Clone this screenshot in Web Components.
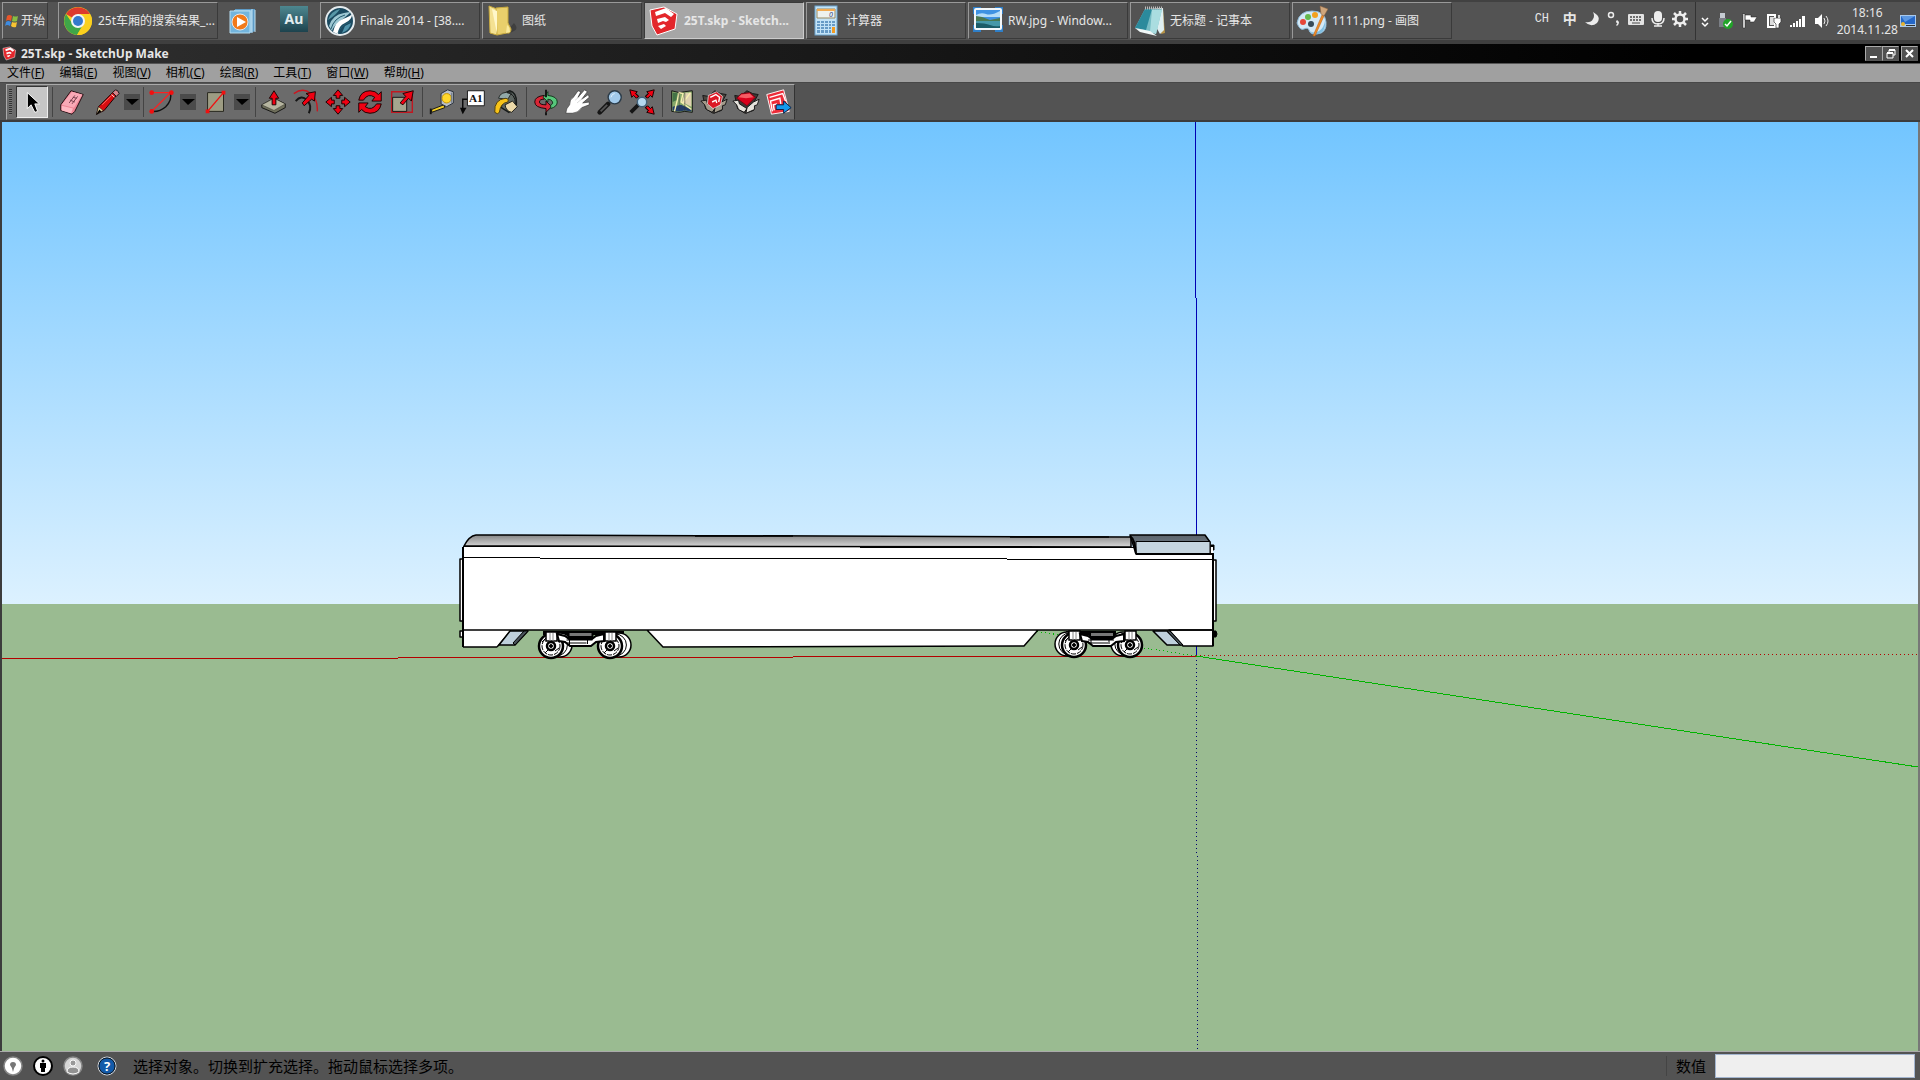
<!DOCTYPE html>
<html lang="zh-CN">
  <head>
    <meta charset="UTF-8" />
    <meta name="viewport" content="width=device-width, initial-scale=1.0" />
    <title>25T.skp - SketchUp Make</title>
    <style>
      html,
      body {
        height: 100%;
        margin: 0;
      }

      body {
        overflow: hidden;
        background: #535353;
        font: 12px/16px "Noto Sans", "Noto Sans CJK SC", sans-serif;
        color: #e6e6e6;
      }
    </style>
  </head>
  <body>
    <desk-top>
      <task-bar slot="taskbar">
        <start-button>开始</start-button>
        <task-button icon="chrome">25t车厢的搜索结果_...</task-button>
        <quick-button icon="player" label="Media Player"></quick-button>
        <quick-button icon="audition" label="Audition"></quick-button>
        <task-button icon="finale">Finale 2014 - [38....</task-button>
        <task-button icon="folder">图纸</task-button>
        <task-button icon="sketchup" active>25T.skp - Sketch...</task-button>
        <task-button icon="calc">计算器</task-button>
        <task-button icon="photo">RW.jpg - Window...</task-button>
        <task-button icon="notepad">无标题 - 记事本</task-button>
        <task-button icon="paint">1111.png - 画图</task-button>
        <system-tray slot="tray"></system-tray>
      </task-bar>
      <title-bar>25T.skp - SketchUp Make</title-bar>
      <menu-bar>
        <menu-entry key="F">文件</menu-entry>
        <menu-entry key="E">编辑</menu-entry>
        <menu-entry key="V">视图</menu-entry>
        <menu-entry key="C">相机</menu-entry>
        <menu-entry key="R">绘图</menu-entry>
        <menu-entry key="T">工具</menu-entry>
        <menu-entry key="W">窗口</menu-entry>
        <menu-entry key="H">帮助</menu-entry>
      </menu-bar>
      <tool-bar>
        <tool-button icon="select" label="选择" active></tool-button>
        <tool-sep></tool-sep>
        <tool-button icon="eraser" label="擦除"></tool-button>
        <tool-button icon="pencil" label="直线" split></tool-button>
        <tool-sep size="s"></tool-sep>
        <tool-button icon="arc" label="圆弧" split></tool-button>
        <tool-button icon="rect" label="矩形" split></tool-button>
        <tool-sep size="m"></tool-sep>
        <tool-button icon="push" label="推拉"></tool-button>
        <tool-button icon="offset" label="偏移"></tool-button>
        <tool-button icon="move" label="移动"></tool-button>
        <tool-button icon="rotate" label="旋转"></tool-button>
        <tool-button icon="scale" label="缩放"></tool-button>
        <tool-sep></tool-sep>
        <tool-button icon="tape" label="卷尺"></tool-button>
        <tool-button icon="text" label="文字"></tool-button>
        <tool-button icon="bucket" label="材质"></tool-button>
        <tool-sep></tool-sep>
        <tool-button icon="orbit" label="环绕观察"></tool-button>
        <tool-button icon="pan" label="平移"></tool-button>
        <tool-button icon="zoom" label="缩放"></tool-button>
        <tool-button icon="extents" label="充满视窗"></tool-button>
        <tool-sep></tool-sep>
        <tool-button icon="map" label="添加位置"></tool-button>
        <tool-button icon="warehouse" label="获取模型"></tool-button>
        <tool-button icon="extension" label="扩展程序库"></tool-button>
        <tool-button icon="layout" label="发送到 LayOut"></tool-button>
      </tool-bar>
      <model-view></model-view>
      <status-bar>选择对象。切换到扩充选择。拖动鼠标选择多项。</status-bar>
    </desk-top>

    <script>
      // icon markup: [viewBox, shapes]
      const logo = `<path d="M2 5L16 2 29 9 27 24 9 30 4 21z" fill="#e3262b" stroke="#fff" stroke-width="1"/>
        <path d="M7 7l11-4 8 6-3 3-6-4-9 3zM9 14l8-2 4 3-3 2-3-1-5 2zM10 21l6-2 2 2-5 3z" fill="#fff"/>`
      const head = 'fill="#f00012" stroke="#160000" stroke-width="1"'

      const icons = {
        flag: ["0 0 16 16", `<path d="M3 3q2-2 5 0L7 8Q4 6 2 8z" fill="#e8552a"/>
          <path d="M9 3q3 1 5 0l-1 5q-3 1-5 0z" fill="#87bd42"/>
          <path d="M2 9q2-2 5 0l-1 4q-3-2-5 0z" fill="#3d8be0"/>
          <path d="M8 9q3 1 5 0l-1 5q-3 1-5-1z" fill="#f7c332"/>`],
        chrome: ["0 0 32 32", `<circle cx="16" cy="16" r="14" fill="#fbd01e"/>
          <path d="M16 16L4 9A14 14 0 0 1 28 9H16z" fill="#dc3a2e"/>
          <path d="M4 9A14 14 0 0 0 15 30L21 20 16 16 10 18z" fill="#3fa648"/>
          <path d="M28 9H16v7l5 4-6 10A14 14 0 0 0 28 9z" fill="#fbd01e"/>
          <circle cx="16" cy="16" r="7" fill="#f2f4f6"/><circle cx="16" cy="16" r="5" fill="#3479cd"/>`],
        player: ["0 0 32 32", `<path d="M7 4h20v22l-4 2H7z" fill="#5d9bc6"/>
          <path d="M6 5h18v22H6z" fill="#8fc3e3"/><path d="M24 4v24M27 5v22" stroke="#c4e3f3"/>
          <path d="M2 6h20v22H2z" fill="#73b5dd" stroke="#b7ddf0"/>
          <circle cx="12" cy="17" r="8" fill="#f27a1a" stroke="#e8e8e8"/><path d="M9 12v10l9-5z" fill="#fff"/>`],
        audition: ["0 0 32 32", `<defs><linearGradient id="au" x2="0" y2="1"><stop stop-color="#4d8790"/><stop offset="1" stop-color="#1d434e"/></linearGradient></defs>
          <path d="M2 1h28v26H2z" fill="url(#au)"/>
          <text x="16" y="19" text-anchor="middle" font-family="Noto Sans" font-weight="700" font-size="14" fill="#e2edef">Au</text>`],
        finale: ["0 0 32 32", `<circle cx="16" cy="16" r="14" fill="#1b4a60" stroke="#e4ebee" stroke-width="2"/>
          <path d="M4 15Q7 6 16 4q-4 6-12 11z" fill="#5796a6"/>
          <path d="M5 21Q8 10 20 8q5-1 7-1Q19 14 14 18T8 26z" fill="#9dc7d2"/>
          <path d="M9 27Q11 17 19 14T28 9Q28 15 21 18T14 29z" fill="#fff"/>
          <path d="M7 24Q10 13 21 10M14 28Q17 20 26 17" stroke="#245c70" fill="none"/>
          <path d="M18 28q8-3 9-10l-6 3z" fill="#5194ab"/>`],
        folder: ["0 0 32 32", `<path d="M20 27l8-9q5 6 0 8l-6 3z" fill="#323232" opacity=".6"/>
          <path d="M3 1l8 3v26l-7-2z" fill="#f4e192" stroke="#c7a93e"/>
          <path d="M10 3l12-1v16l3 6q0 5-4 4l-10 2z" fill="#e9cf6b" stroke="#c7a93e"/>
          <path d="M6 4l5 2v23z" fill="#fff7c9"/><path d="M21 20q3 2 3 7l-4 1z" fill="#f9e99d"/>`],
        sketchup: ["0 0 32 32", logo],
        calc: ["0 0 32 32", `<rect x="5" y="1" width="22" height="29" fill="#c3e3f7" stroke="#6ea6cf"/>
          <path d="M7 4h18v9H7z" fill="#eef2ef" stroke="#9a8a60"/>
          <path d="M7 4h18v2H7z" fill="#f2ab52"/>
          <text x="21" y="12" text-anchor="middle" font-family="Noto Sans" font-style="italic" font-size="7" fill="#303c80">0</text>
          <g fill="#679bc6"><path d="M7 16h3v2H7zM11 16h3v2h-3zM15 16h3v2h-3zM19 16h2v2h-2zM22 16h3v2h-3zM7 19h3v2H7zM11 19h3v2h-3zM15 19h3v2h-3zM19 19h2v2h-2zM22 19h3v2h-3zM7 22h3v2H7zM11 22h3v2h-3zM15 22h3v2h-3zM19 22h2v2h-2zM7 25h3v3H7zM11 25h3v3h-3zM15 25h3v3h-3zM19 25h2v3h-2z"/></g>
          <path d="M22 22h3v6h-3z" fill="#f29b21"/>`],
        photo: ["0 0 32 32", `<path d="M1 2h30v25H1z" fill="#2f7fc8"/><path d="M9 1h14v27H9zM0 9h32v11H0z" fill="#535353"/>
          <rect x="3" y="4" width="26" height="20" rx="1" fill="#3f92e2" stroke="#f3f7fa" stroke-width="2"/>
          <path d="M4 10q5-3 10-1t14-3v6H4z" fill="#b4dcf7"/><path d="M4 11l6 1 8 3 10-2v4H4z" fill="#4b7850"/>
          <path d="M4 16h24v7H4z" fill="#4798a9"/><path d="M4 18q9 0 14 2t10 1v2H4z" fill="#1d5c68"/>`],
        notepad: ["0 0 32 32", `<path d="M29 4l2 24-4 1z" fill="#b79346"/><path d="M12 4l17-1 1 22-4 4z" fill="#dfeff1"/>
          <path d="M11 4h17l-6 25L1 23z" fill="#77bdc5"/><path d="M11 4h7l-6 21-11-2z" fill="#2b8a9c"/>
          <path d="M18 5h10l-6 24-6-2z" fill="#aadde0"/><path d="M1 23l15 3 7 5-17-4z" fill="#f1f8f8"/>
          <path d="M11 3h18" stroke="#bbb" stroke-width="3" stroke-dasharray="1 1"/>`],
        paint: ["0 0 32 32", `<path d="M1 18Q3 6 16 6t14 11-9 12q-7 1-8-4-1-3-5-1T1 18z" fill="#d4e9f6" stroke="#8cb8d6"/>
          <path d="M14 26q4 3 9 0t6-10q1 12-8 13-6 0-7-3z" fill="#7fbfe3"/>
          <circle cx="7" cy="17" r="3" fill="#e64638"/><circle cx="12" cy="12" r="3" fill="#65b94e"/>
          <circle cx="19" cy="10" r="3" fill="#f3a11e"/><circle cx="15" cy="19" r="3" fill="#384b58"/>
          <path d="M26 10l2 1-9 20-2 0z" fill="#f08d28" stroke="#b75c10" stroke-width=".5"/>
          <path d="M24 1l8 3-4 7-3-2z" fill="#cfa67c" stroke="#8c633f" stroke-width=".5"/>`],

        select: ["0 0 32 32", `<path d="M11 6v17l4-4 4 8 3-1-3-8h5z" fill="#000" stroke="#fff" stroke-width="1"/>`],
        eraser: ["0 0 32 32", `<path d="M4 19L15 4l13 4-9 18-3 3-12-4z" fill="#ee8595" stroke="#1b0a0c"/>
          <path d="M5 19l11-14 11 3-9 14z" fill="#f9a9b6"/><path d="M5 20l12 3-2 5-10-3z" fill="#ffb8c2"/>
          <path d="M13 17l6-8M16 18l6-8M14 14l5 2M17 11l4 1" stroke="#713b48"/>`],
        pencil: ["0 0 32 32", `<path d="M8 21L24 5l4 3-14 17-8 4z" fill="#d90d10" stroke="#180000"/>
          <path d="M8 21l5 4-7 4z" fill="#e9d59b" stroke="#111" stroke-width=".5"/>
          <path d="M5 30l4-6 2 2z" fill="#000"/><path d="M23 6l3-3q3 0 4 4l-3 3z" fill="#d6858c" stroke="#111"/>
          <path d="M22 8l3 3" stroke="#fff"/><path d="M12 19L22 9" stroke="#ff6a5f"/>`],
        arc: ["0 0 32 32", `<path d="M25 6Q27 14 20 21 13 27 5 26" fill="none" stroke="#101010" stroke-width="1.500"/>
          <path d="M5 6h20L5 26" fill="none" stroke="#ff2020" stroke-width="1.500"/>
          <circle cx="5" cy="6" r="2.500" fill="#f01010"/><circle cx="26" cy="6" r="2.500" fill="#f01010"/><circle cx="5" cy="26" r="2.500" fill="#f01010"/>`],
        rect: ["0 0 32 32", `<path d="M7 6h17v20H7z" fill="#9d9c83" stroke="#22221a"/>
          <path d="M7 26L24 6" stroke="#f01010" stroke-width="1.500"/><path d="M22 4h4v4h-4zM5 24h4v4H5z" fill="#f01010"/>`],
        push: ["0 0 32 32", `<path d="M3 19l13-7 12 6v4L17 28 3 22z" fill="#6f6f5b" stroke="#111"/>
          <path d="M3 19l13-7 12 6-12 7z" fill="#b6b5a0" stroke="#2a2a22" stroke-width=".5"/>
          <path d="M14 19v-7h-3l5-8 5 8h-3v7z" ${head}/>`],
        offset: ["0 0 32 32", `<path d="M3 7Q13 0 21 7t7 19" fill="none" stroke="#cb1720" stroke-width="1.500"/>
          <path d="M5 15q6-7 12-1t2 14" fill="none" stroke="#151515" stroke-width="2"/>
          <path d="M12 17l7-8-3-2 10-2-1 10-3-2-8 7z" ${head}/>`],
        move: ["0 0 32 32", `<path d="M14 12v-3h-3l5-6 5 6h-3v3zM14 20v3h-3l5 6 5-6h-3v-3zM12 14H9v-3l-6 5 6 5v-3h3zM20 14h3v-3l6 5-6 5v-3h-3z" ${head}/>`],
        rotate: ["0 0 32 32", `<path d="M4 14Q6 4 16 4q6 0 9 4l3-3v10H18l3-4q-7-5-12 3z" ${head}/>
          <path d="M28 18q-2 10-12 10-6 0-9-4l-3 3V17h10l-3 4q7 5 12-3z" ${head}/>`],
        scale: ["0 0 32 32", `<path d="M5 5h22v22H5z" fill="none" stroke="#c01821" stroke-width="1.500"/>
          <path d="M6 11h15v15H6z" fill="#a5a58f" stroke="#111"/><path d="M14 17l6-7-3-3 11-3-2 11-3-3-6 7z" ${head}/>`],
        tape: ["0 0 32 32", `<path d="M18 19L5 24v3l14-5z" fill="#f3cf28" stroke="#111"/><path d="M4 23v6" stroke="#111" stroke-width="2"/>
          <path d="M15 7l7-4 6 2v12l-7 4-6-3z" fill="#b8bec7" stroke="#222b36"/><circle cx="21" cy="12" r="5" fill="#ffd72b" stroke="#c59200"/><path d="M26 6v11" stroke="#6d7684"/>`],
        text: ["0 0 32 32", `<path d="M10 13H4v10" fill="none" stroke="#080808" stroke-width="1.500"/><path d="M1 22h7l-4 7z" fill="#080808"/>
          <path d="M9 4h18v16H9z" fill="#fff" stroke="#151515"/>
          <text x="18" y="16" text-anchor="middle" font-family="Liberation Serif" font-weight="700" font-size="12" fill="#101010">A1</text>`],
        bucket: ["0 0 32 32", `<path d="M12 8l8-4q8 2 7 15l-8 8-8-5z" fill="#5e6662" stroke="#161a19" stroke-width="1.500"/>
          <path d="M8 12q2-8 14-6l-4 7z" fill="#91a8a8" stroke="#282c2a"/>
          <path d="M15 19l8-4 5 6-6 6q-6-1-7-8z" fill="#ecd9a8" stroke="#1b1b14"/>
          <path d="M4 27Q3 13 16 12q4 1 2 4-8 1-9 11-2 3-5 0z" fill="#f7c318" stroke="#463a12"/>
          <path d="M17 6q9 1 9 12" fill="none" stroke="#101010"/>`],
        orbit: ["0 0 32 32", `<path d="M14 9Q4 10 4 16t12 7v4l6-6-6-6v4q-7 0-7-3t5-3z" fill="#d92535" stroke="#190406"/>
          <path d="M18 5v4q10 1 10 7 0 5-7 7v-4q3-1 2-3-1-3-5-3v3l-5-5z" fill="#57c77b" stroke="#10351a"/><path d="M16 3v8M16 27v3" stroke="#111" stroke-width="2"/>`],
        pan: ["0 0 32 32", `<path d="M3 28q0-5 4-9 0-6 4-8l5-7 3 1-3 6 7-8 3 2-6 8 7-5 1 3-7 6 7-1v3l-8 3q-4 6-10 6z" fill="#fff" stroke="#303030" stroke-width=".7"/>
          <path d="M13 14l5-4M15 17l6-5" stroke="#bbb" stroke-width=".6"/>`],
        zoom: ["0 0 32 32", `<path d="M14 18L5 27" stroke="#151515" stroke-width="5" stroke-linecap="round"/><path d="M13 19l-7 7" stroke="#555" stroke-width="2"/>
          <circle cx="21" cy="11" r="7" fill="#a2caeb" stroke="#2b3b48" stroke-width="1.500"/><path d="M17 11q1-4 4-4" stroke="#e3f3ff" fill="none"/>`],
        extents: ["0 0 32 32", `<path d="M12 19l-8 8" stroke="#151515" stroke-width="4"/>
          <path d="M20 11l4-4M12 11L8 7M20 21l4 4" stroke="#180000" stroke-width="3"/>
          <path d="M3 3l8 2-2 2 3 3-2 2-3-3-2 2zM29 3l-8 2 2 2-3 3 2 2 3-3 2 2zM29 29l-8-2 2-2-3-3 2-2 3 3 2-2z" ${head}/>
          <circle cx="16" cy="16" r="5" fill="#b4d7ee" stroke="#426179" stroke-width="1.500"/>`],
        map: ["0 0 32 32", `<path d="M5 4l8 2 6-1 8-1v23l-8-1-6 1-8-1z" fill="#86a86a" stroke="#111"/>
          <path d="M19 6h7v15l-10-5z" fill="#dfd2b0"/><path d="M6 21l9-2 11 5v2l-7-1-6 1-7-1z" fill="#243d68"/>
          <path d="M8 26l5-20 4 1-2 9 11 8M17 17l8-11" fill="none" stroke="#f7efb1" stroke-width="1.500"/><path d="M13 6v20M19 6v20" stroke="#333" stroke-width=".6"/>
          <path d="M6 6h5l-1 8-4 2z" fill="#447346"/>`],
        // open carton with something inside
        warehouse: ["0 0 32 32", `<path d="M4 9l6 1 7-6 6 3 6 1-4 7-1 10-9 3-8-5z" fill="#4b443d" stroke="#151515"/>
          <path d="M2 15l6-1 1 4 8 5-3 4-6-3-2-5zM24 16l6-3-2 6-3 1v4l-9 4 1-6z" fill="#a39b8b" stroke="#151515"/>
          <path d="M10 9l9-4 6 5-2 9-8 4-6-5z" fill="#dc1825" stroke="#fff" stroke-width=".7"/><path d="M12 11l6-3 4 3-1 5M14 16l4-2 1 3" fill="none" stroke="#fff" stroke-width="1.500"/>`],
        extension: ["0 0 32 32", `<path d="M4 9l6 1 7-6 6 3 6 1-4 7-1 10-9 3-8-5z" fill="#3d3835" stroke="#151515"/>
          <path d="M2 15l6-1 1 4 8 5-3 4-6-3-2-5zM24 16l6-3-2 6-3 1v4l-9 4 1-6z" fill="#e6e3dd" stroke="#151515"/>
          <path d="M6 12l5-5 9-1 6 5-9 9z" fill="#d9001b" stroke="#6f0914"/><path d="M11 8l9-1 4 4-8 1-8-1z" fill="#f55c64"/>`],
        layout: ["0 0 32 32", `<path d="M4 8l18-5 6 23-19 3z" fill="#ed2b38" stroke="#fff"/>
          <path d="M7 11l14-4 3 8M10 26L8 15l10-3 1 6M12 25l-1-6 4-1" fill="none" stroke="#fff" stroke-width="1.500"/>
          <path d="M14 19h8v-4l8 7-8 6v-4h-8z" fill="#1499ed" stroke="#091d42"/>`],

        moon: ["0 0 16 16", `<path d="M9 1q9 5 4 11-6 5-12-1 6 1 8-3 2-3 0-7z" fill="#ececec"/>`],
        punct: ["0 0 16 16", `<circle cx="5" cy="4" r="2.500" fill="none" stroke="#ececec" stroke-width="1.500"/><path d="M11 9q4 2 0 6l-1-1q2-2 1-2-2-1 0-3z" fill="#ececec"/>`],
        keyboard: ["0 0 16 16", `<rect y="3" width="16" height="11" rx="1" fill="#e3e3e3"/><path d="M2 6h12M2 9h12" stroke="#484848" stroke-width="1.500" stroke-dasharray="2 1"/><path d="M4 12h8" stroke="#484848"/>`],
        mic: ["0 0 16 16", `<rect x="4" y="0" width="8" height="11" rx="4" fill="#eee"/><path d="M2 7q0 6 6 6t6-6M8 12v3M4 15h8" fill="none" stroke="#eee" stroke-width="1.500"/>`],
        gear: ["0 0 16 16", `<circle cx="8" cy="8" r="4.500" fill="none" stroke="#eee" stroke-width="2.500"/><path d="M8 0v3M8 13v3M0 8h3M13 8h3M2 2l3 3M11 11l3 3M2 14l3-3M11 5l3-3" stroke="#eee" stroke-width="2.500"/>`],
        more: ["0 0 16 16", `<path d="M5 5l3 3 3-3M5 10l3 3 3-3" fill="none" stroke="#fff" stroke-width="1.500"/>`],
        usb: ["0 0 16 16", `<path d="M2 0h5v5h1v9H1V5h1z" fill="#7b7f86"/><path d="M2 0h5v5H2z" fill="#c5cbd2"/><circle cx="10" cy="11" r="5" fill="#22a429"/><path d="M7 11l2 2 4-5" fill="none" stroke="#fff" stroke-width="1.500"/>`],
        tflag: ["0 0 16 16", `<path d="M0 1h3v14H1V2zM3 2h6v2h6l-3 5H8V7H3z" fill="#fff" stroke="#222" stroke-width=".5"/>`],
        plug: ["0 0 16 16", `<path d="M2 2h7v12H2z" fill="none" stroke="#fff" stroke-width="2"/><path d="M4 4h4v8H4z" fill="#ddd"/><path d="M8 5h7v4l-2 2v4h-3v-4l-2-2z" fill="#fff" stroke="#333" stroke-width=".7"/><path d="M9 2v3M13 2v3" stroke="#fff" stroke-width="1.500"/>`],
        signal: ["0 0 16 16", `<path d="M0 12h2v2H0zM3 10h2v4H3zM6 8h2v6H6zM9 6h2v8H9zM12 3h3v11h-3z" fill="#fff"/>`],
        speaker: ["0 0 16 16", `<path d="M1 5h3l4-4v14l-4-4H1z" fill="#fff"/><path d="M10 5q2 3 0 6M12 3q4 5 0 10" stroke="#eee" fill="none"/>`],
        desk: ["0 0 16 16", `<path d="M0 2h16v12H0z" fill="#a9c9ec"/><path d="M1 3h14v8H1z" fill="#2567c8"/><path d="M1 3h14L5 9z" fill="#5c98e2"/><circle cx="3" cy="11" r="2" fill="#e7b32d"/><path d="M6 12h9v1H6z" fill="#333"/>`],

        geo: ["0 0 20 20", `<circle cx="10" cy="10" r="9" fill="#fff" stroke="#888" stroke-width="1.500"/><path d="M10 16q-1-5-3-7a3 3 0 1 1 6 0q-2 2-3 7z" fill="#777"/>`],
        credit: ["0 0 20 20", `<circle cx="10" cy="10" r="9" fill="#fff" stroke="#000" stroke-width="2"/><circle cx="10" cy="5" r="1.500"/><path d="M7 7h6v5h-1v4H8v-4H7z"/>`],
        user: ["0 0 20 20", `<circle cx="10" cy="10" r="9" fill="#d6d6d6" stroke="#888" stroke-width="1.500"/><circle cx="10" cy="7" r="3" fill="#999" stroke="#f8f8f8"/><path d="M4 16q0-5 6-5t6 5q-6 4-12 0z" fill="#929292" stroke="#fff"/>`],
        help: ["0 0 20 20", `<circle cx="10" cy="10" r="9" fill="#135aa9" stroke="#ddd"/><circle cx="10" cy="10" r="8" fill="none" stroke="#101820"/>
          <text x="10" y="15" text-anchor="middle" font-family="Noto Sans" font-weight="700" font-size="13" fill="#fff">?</text>`],
      }

      const svg = (name, size) =>
        `<svg width="${size}" height="${size}" viewBox="${icons[name][0]}" aria-hidden="true">${icons[name][1]}</svg>`

      // shared by every element with a button inside
      const reset = `
        button { font: inherit; color: inherit; border: 0; background: none; padding: 0; margin: 0; }
        svg { display: block; flex: none; }`

      // small base class: render() gives the shadow markup
      class Base extends HTMLElement {
        constructor() {
          super()
          this.attachShadow({ mode: "open" })
        }
        connectedCallback() {
          this.shadowRoot.innerHTML = this.render()
        }
      }

      class DeskTop extends Base {
        render() {
          return `<style>
            :host { display: flex; flex-direction: column; height: 100vh; }
            ::slotted(model-view) { flex: 1; min-height: 0; }
          </style><slot name="taskbar"></slot><slot></slot>`
        }
      }

      class TaskBar extends Base {
        render() {
          return `<style>
            :host { display: block; background: #535353; border-top: 2px solid #414141; border-bottom: 4px solid #3f3f3f; }
            nav { display: flex; height: 38px; padding-left: 2px; }
            .tasks { display: flex; gap: 2px; }
            .tray { margin-left: auto; display: flex; }
          </style>
          <nav><div class="tasks"><slot></slot></div><div class="tray"><slot name="tray"></slot></div></nav>`
        }
      }

      class StartButton extends Base {
        render() {
          return `<style>${reset}
            :host { display: block; margin-right: 8px; }
            button { display: flex; align-items: center; gap: 1px; width: 46px; height: 37px; padding-left: 1px;
              border: 1px solid; border-color: #999 #3a3a3a #3a3a3a #999; }
          </style><button>${svg("flag", 16)}<span><slot></slot></span></button>`
        }
      }

      class TaskButton extends Base {
        render() {
          return `<style>${reset}
            :host { display: block; }
            button { display: flex; align-items: center; gap: 4px; width: 160px; height: 37px; padding-left: 3px;
              border: 1px solid; border-color: #999 #3a3a3a #3a3a3a #999; white-space: nowrap; }
            :host([active]) button { background: #a6a6a6; border-color: #3a3a3a #ccc #ccc #3a3a3a; font-weight: 700; }
          </style><button>${svg(this.getAttribute("icon"), 32)}<span><slot></slot></span></button>`
        }
      }

      class QuickButton extends Base {
        render() {
          return `<style>${reset}
            :host { display: block; padding: 0 4px; }
            button { display: grid; place-items: center; width: 40px; height: 37px; }
          </style><button aria-label="${this.getAttribute("label")}">${svg(this.getAttribute("icon"), 32)}</button>`
        }
      }

      class SystemTray extends Base {
        render() {
          const cell = (name) => `<button aria-label="${name}">${svg(name, 16)}</button>`
          return `<style>${reset}
            :host { display: flex; align-items: stretch; padding-right: 4px; }
            .ime, .sys { display: flex; align-items: center; }
            .ime { padding: 0 4px 4px 0; border-right: 1px solid #333; }
            .ime button { display: grid; place-items: center; width: 22px; }
            .sys button { display: grid; place-items: center; width: 24px; }
            .sys button:first-child { width: 18px; }
            .lang { width: 24px; font-family: "Liberation Mono", monospace; }
            .zh { font-weight: 700; font-size: 14px; }
            time { display: flex; flex-direction: column; justify-content: center; text-align: center; line-height: 17px; padding: 0 2px 0 3px; }
            .desk { display: grid; place-items: center; }
          </style>
          <div class="ime"><span class="lang">CH</span><button class="zh">中</button>
            ${["moon", "punct", "keyboard", "mic", "gear"].map(cell).join("")}</div>
          <div class="sys">${["more", "usb", "tflag", "plug", "signal", "speaker"].map(cell).join("")}</div>
          <time><span>18:16</span><span>2014.11.28</span></time>
          <button class="desk" aria-label="desk">${svg("desk", 16)}</button>`
        }
      }

      class TitleBar extends Base {
        render() {
          return `<style>${reset}
            :host { display: flex; align-items: center; gap: 4px; height: 19px; padding: 0 2px;
              background: linear-gradient(90deg, #303030, #000 88%); border-bottom: 1px solid #555; font-weight: 700; }
            h1 { font: inherit; margin: 0; flex: 1; }
            .box { display: flex; }
            .box button { display: grid; place-items: center; box-sizing: border-box; width: 17px; height: 15px; background: #505050;
              border: 1px solid; border-color: #aaa #555 #555 #aaa; }
            .box .close { margin-left: 2px; }
          </style>
          ${svg("sketchup", 15)}<h1><slot></slot></h1>
          <div class="box">
            <button aria-label="最小化"><svg width="11" height="11"><path d="M2 8h7v2H2z" fill="#fff"/></svg></button>
            <button aria-label="还原"><svg width="11" height="11"><path d="M4 4V2h6v5H8M2 5h6v5H2z" fill="none" stroke="#fff"/><path d="M4 2h6M2 5h6" stroke="#fff" stroke-width="2"/></svg></button>
            <button class="close" aria-label="关闭"><svg width="11" height="11"><path d="M2 2l7 7M9 2L2 9" stroke="#fff" stroke-width="2"/></svg></button>
          </div>`
        }
      }

      class MenuBar extends Base {
        render() {
          return `<style>
            :host { display: block; background: #a0a0a0; color: #000; border-bottom: 1px solid #484848; }
            nav { display: flex; align-items: center; gap: 15px; height: 18px; padding-left: 7px; }
          </style><nav><slot></slot></nav>`
        }
      }

      class MenuEntry extends Base {
        render() {
          return `<style>${reset}
            :host { display: block; }
            button { display: block; }
          </style><button><slot></slot>(<u>${this.getAttribute("key")}</u>)</button>`
        }
      }

      class ToolBar extends Base {
        render() {
          return `<style>
            :host { display: block; background: #535353; border-bottom: 2px solid #3c3c3c; padding: 1px 0 0 6px; }
            .strip { display: inline-flex; align-items: center; height: 34px; background: #6b6b6b; vertical-align: top;
              border: 1px solid; border-color: #aaa #333 #555 #aaa; }
            .grip { width: 3px; height: 26px; margin: 0 4px 0 2px;
              background: repeating-linear-gradient(#333 0 1px, #777 1px 2px); }
          </style><div class="strip" role="toolbar"><span class="grip"></span><slot></slot></div>`
        }
      }

      class ToolSep extends Base {
        render() {
          return `<style>
            :host { display: flex; justify-content: center; width: 8px; }
            :host([size="s"]) { width: 2px; }
            :host([size="m"]) { width: 6px; }
            i { width: 1px; height: 30px; background: #444; }
          </style><i></i>`
        }
      }

      class ToolButton extends Base {
        render() {
          const label = this.getAttribute("label")
          const more = this.hasAttribute("split")
            ? `<button class="more" aria-label="${label} ▾"><svg width="16" height="16"><path d="M2 5h13L8 11z"/></svg></button>`
            : ""
          return `<style>${reset}
            :host { display: flex; align-items: center; }
            :host([split]) { padding-left: 2px; }
            .main { display: grid; place-items: center; box-sizing: border-box; width: 32px; height: 32px; }
            :host([active]) .main { background: #c6c6c6; border: 1px solid #333; border-color: #333 #eee #eee #333; }
            .more { margin: 0 2px; background: #4b4b4b; }
          </style>
          <button class="main" aria-label="${label}">${svg(this.getAttribute("icon"), 30)}</button>${more}`
        }
      }

      class ModelView extends Base {
        // near wheel with its frame piece, centred on 0,0
        wheel(x, y, back) {
          return `<g transform="translate(${x} ${y})" stroke="#000">
            <ellipse cx="${back}" cy="-1" rx="12" ry="12" fill="#fff" stroke-width="1.500"/>
            <ellipse cx="${back * 0.6}" cy="-1" rx="11" ry="11" fill="#fff"/>
            <circle r="12" fill="#fff" stroke-width="2.500"/>
            <circle r="9" fill="none" stroke-width="1" stroke-dasharray="5 1"/>
            <circle r="4" fill="#fff" stroke-width="2.500"/>
            <path d="M-9-4l5-5M4 5l4-3M-6 7l3-3"/>
            <path d="M-5-14H6v9H-5z" fill="#fff" stroke-width="1.500"/><path d="M-1-13v8M2-13v8" stroke="#888"/>
            <circle r="1.500"/>
          </g>`
        }
        bogie(a, b, y, back) {
          const m = (a + b) / 2
          return `<g>
            <path d="M${a - 8} 631H${b + 14 * Math.sign(back)}v4H${a - 8}z" fill="#000"/>
            ${this.wheel(a, y, back)}${this.wheel(b, y, back)}
            <path d="M${a + 6} 634l8 2 4 3h${b - a - 36}l4-3 8-2v7l-8 1-5 4h${-(b - a - 38)}l-5-4-6-1z" fill="#fff" stroke="#000" stroke-width="2"/>
            <path d="M${m - 12} 632h24v5h-24z" fill="#777" stroke="#000" stroke-width="2"/>
            <path d="M${m - 14} 640h26M${m - 14} 643h20M${m + 7} 639v5M${m - 11} 637v8" fill="none" stroke="#000"/>
          </g>`
        }
        render() {
          return `<style>
            :host { display: flex; background: #9abb91; border: solid #3c3c3c; border-width: 0 2px 0 2px; border-right-color: #777; }
            svg { display: block; flex: 1; min-width: 0; height: 100%; }
          </style>
          <svg viewBox="2 122 1916 929" preserveAspectRatio="xMidYMid slice" role="img" aria-label="25T">
            <defs>
              <linearGradient id="sky" x2="0" y2="1"><stop stop-color="#72c5ff"/><stop offset="1" stop-color="#dcf1ff"/></linearGradient>
              <linearGradient id="roof" x2="0" y2="1"><stop stop-color="#858585"/><stop offset="1" stop-color="#d8d8d8"/></linearGradient>
              <linearGradient id="duct" x2="0" y2="1"><stop stop-color="#5c646c"/><stop offset="1" stop-color="#7b8791"/></linearGradient>
            </defs>
            <path d="M0 122h1920v482H0z" fill="url(#sky)"/>
            <path d="M0 604h1920v450H0z" fill="#9abb91"/>

            <!-- axes -->
            <g fill="none" shape-rendering="crispEdges">
              <path d="M1195.500 122v176M1196.500 298v358" stroke="#0000b4"/>
              <path d="M1196.500 656L1197.500 1051" stroke="#00006e" stroke-dasharray="1 3"/>
              <path d="M2 659L1196 656" stroke="#b40000"/>
              <path d="M1196 656L1918 654" stroke="#b40000" stroke-dasharray="1 3"/>
              <path d="M1196 656L1918 767" stroke="#00b400"/>
              <path d="M1196 656L1034 631" stroke="#00b400" stroke-dasharray="1 3"/>
            </g>

            ${this.bogie(551, 610, 646, 9)}
            ${this.bogie(1074, 1130, 645, -7)}

            <!-- coach -->
            <g stroke="#000" stroke-linejoin="round">
              <path d="M460 559h3v62h-3zM1213 560h3v61h-3zM460 631h3v6h-3z" fill="#fff" stroke-width="1.500"/>
              <path d="M1211 545h3v5h-3zM1213 631h3l1 3-1 3h-3z"/>
              <path d="M463 546L1213 547V630L1038 630 1024 646 663 647 647 630H510L497 647H463z" fill="#fff" stroke="none"/>
              <path d="M1169 630H1213V646H1183z" fill="#fff" stroke-width="1.500"/>
              <path d="M463 630H1213M497 647H463M647 630L663 647 1024 646 1038 630M497 647L511 631" fill="none" stroke-width="1.500"/>
              <path d="M463 547V647M1213 553V646" stroke-width="2"/>
              <path d="M510 631h18l-13 14h-16z" fill="#bfd0dc" stroke-width="1.500"/>
              <path d="M524 631h4l-13 14-2-2z" fill="#48525a"/>
              <path d="M1153 631h14l14 14h-14z" fill="#bfd0dc" stroke-width="1.500"/>
              <path d="M1167 631h3l13 14h-3z" fill="#48525a"/>
              <path d="M464 546Q469 536 476 535L1131 537V547z" fill="url(#roof)" stroke-width="1.500"/>
              <path d="M463 557.500H540M540 558.500H1007M1007 559.500H1213M463 546.500H860M860 547.500H1134" fill="none" shape-rendering="crispEdges"/>
              <path d="M695 536h98M1010 537h99" stroke-width="1.500"/>
              <path d="M1130 535h75l5 7v12h-74z" fill="url(#duct)" stroke-width="1.500"/>
              <path d="M1136 541.500h74v12h-74z" fill="#c5d5df"/>
              <path d="M1130 536q5 3 6 18" fill="none" stroke-width="2"/>
              <path d="M1136 554h77" stroke-width="2"/>
            </g>
          </svg>`
        }
      }

      class StatusBar extends Base {
        render() {
          return `<style>${reset}
            :host { display: flex; align-items: center; height: 27px; padding: 0 5px 1px 3px; background: #535353; color: #000;
              border-top: 1px solid #aaa; font-size: 15px; line-height: 20px; }
            .icons { display: flex; gap: 10px; }
            .icons button:last-child { margin-left: 4px; }
            output { margin-left: 16px; flex: 1; }
            label { padding: 0 9px; border-left: 1px solid #444; }
            input { box-sizing: border-box; width: 200px; height: 24px; border: 1px solid #a3b5cf; background: #efefef; padding: 0 4px; font: inherit; }
          </style>
          <div class="icons">
            <button aria-label="地理位置">${svg("geo", 20)}</button>
            <button aria-label="版权信息">${svg("credit", 20)}</button>
            <button aria-label="登录">${svg("user", 20)}</button>
            <button aria-label="帮助">${svg("help", 20)}</button>
          </div>
          <output><slot></slot></output>
          <label for="value">数值</label><input id="value" type="text" />`
        }
      }

      // 注册
      customElements.define("desk-top", DeskTop)
      customElements.define("task-bar", TaskBar)
      customElements.define("start-button", StartButton)
      customElements.define("task-button", TaskButton)
      customElements.define("quick-button", QuickButton)
      customElements.define("system-tray", SystemTray)
      customElements.define("title-bar", TitleBar)
      customElements.define("menu-bar", MenuBar)
      customElements.define("menu-entry", MenuEntry)
      customElements.define("tool-bar", ToolBar)
      customElements.define("tool-sep", ToolSep)
      customElements.define("tool-button", ToolButton)
      customElements.define("model-view", ModelView)
      customElements.define("status-bar", StatusBar)
    </script>
  </body>
</html>
